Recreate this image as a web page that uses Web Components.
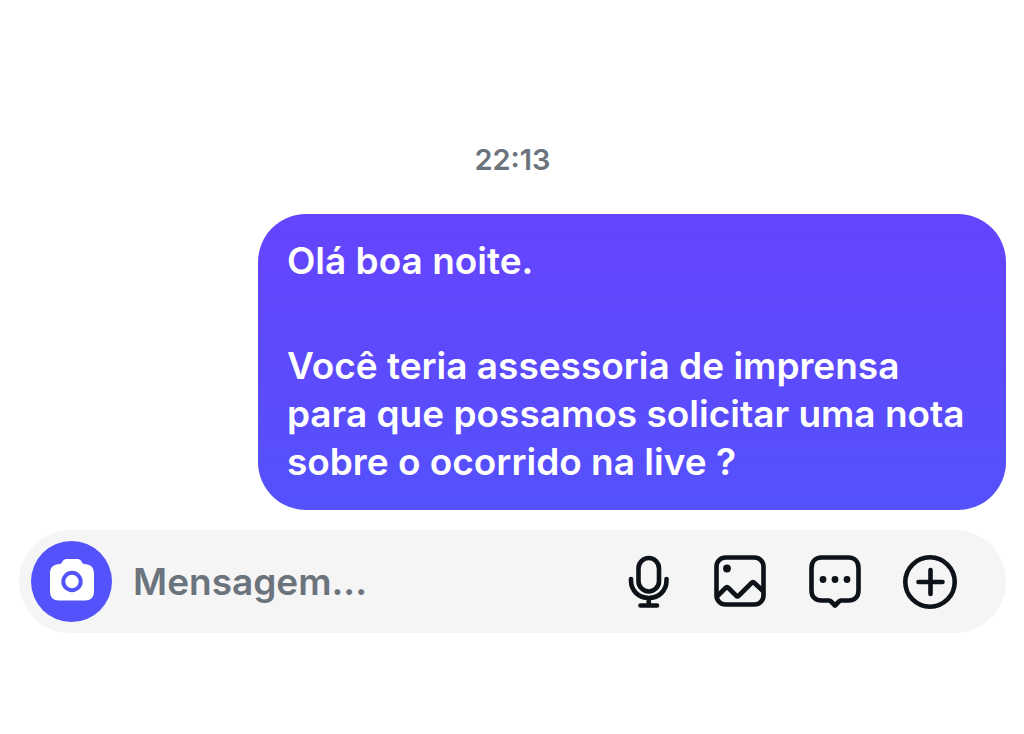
<!DOCTYPE html>
<html lang="pt-BR">
<head>
<meta charset="utf-8">
<meta name="viewport" content="width=device-width, initial-scale=1">
<title>Mensagem</title>
<style>
  body { margin: 0; background: #fff; font-family: Inter, "Liberation Sans", sans-serif; }
</style>
</head>
<body>
<chat-thread>
  <chat-time>22:13</chat-time>
  <chat-bubble>
    <p>Olá boa noite.</p>
    <p>Você teria assessoria de imprensa para que possamos solicitar uma nota sobre o ocorrido na live ?</p>
  </chat-bubble>
  <chat-composer></chat-composer>
</chat-thread>

<script>
function define(name, html) {
  const template = document.createElement('template');
  template.innerHTML = html;
  customElements.define(name, class extends HTMLElement {
    constructor() {
      super();
      this.attachShadow({ mode: 'open' }).append(template.content.cloneNode(true));
    }
  });
}

define('chat-thread', `
  <style>
    :host { display: flex; flex-direction: column; padding: 144px 18px 24px 19px; }
  </style>
  <slot></slot>`);

define('chat-time', `
  <style>
    :host { display: block; text-align: center; color: #6b737c; font-size: 29px; font-weight: 600; line-height: 32px; }
    time { display: block; }
  </style>
  <time><slot></slot></time>`);

define('chat-bubble', `
  <style>
    :host {
      display: flex; flex-direction: column; gap: 57px; align-self: flex-end;
      box-sizing: border-box; width: calc(76% - 2px); margin-top: 38px; padding: 23px 32px 24px 29px;
      border-radius: 48px; background: linear-gradient(#6544fd, #5451fc);
      color: #fff; font-size: 37px; font-weight: 600; line-height: 48px;
    }
    ::slotted(p) { margin: 0; }
  </style>
  <slot></slot>`);

define('icon-button', `
  <style>
    :host { display: block; flex: none; }
    button {
      display: grid; place-items: center; width: 56px; height: 56px; padding: 0;
      border: 0; border-radius: 50%; background: none; color: #0d1118; cursor: pointer;
    }
    :host([filled]) button { width: 81px; height: 81px; background: #5453fb; color: #fff; }
    ::slotted(svg) { display: block; width: 56px; height: 56px; }
  </style>
  <button type="button"><slot></slot></button>`);

/* Passes the host's label on to the inner button. */
document.querySelectorAll('icon-button').forEach(labelButton);
function labelButton(host) {
  host.shadowRoot.querySelector('button').setAttribute('aria-label', host.getAttribute('label'));
}

define('chat-composer', `
  <style>
    :host { display: block; margin-top: 20px; }
    form {
      display: flex; align-items: center; box-sizing: border-box; min-height: 103px;
      padding: 8px 48px 8px 12px; border-radius: 52px; background: #f5f5f5;
    }
    input {
      flex: 1; min-width: 0; margin: 0 16px 0 21px; padding: 0; border: 0; outline: 0; background: none;
      color: #0d1118; font: 600 37px/48px Inter, "Liberation Sans", sans-serif;
    }
    input::placeholder { color: #6b737c; opacity: 1; }
    .tools { display: flex; gap: 38px; }
  </style>
  <form>
    <icon-button filled label="Câmera">
      <svg viewBox="0 0 56 56">
        <path fill="currentColor" d="M16 10 C18 10 18.500 5 22.500 5 H33.500 C37.500 5 38 10 40 10 C46.500 10 50 13.500 50 19.500 V37.500 C50 43.500 46.500 46.500 41 46.500 H15 C9.500 46.500 6 43.500 6 37.500 V19.500 C6 13.500 9.500 10 16 10 Z"/>
        <circle cx="28" cy="27.500" r="8.700" fill="none" stroke="#5453fb" stroke-width="4"/>
      </svg>
    </icon-button>
    <input type="text" placeholder="Mensagem..." aria-label="Mensagem">
    <div class="tools">
      <icon-button label="Mensagem de voz">
        <svg viewBox="0 0 56 56" fill="none" stroke="currentColor" stroke-width="4.600" stroke-linecap="round">
          <rect x="18.500" y="4" width="20.500" height="33.500" rx="10.250"/>
          <path d="M11 25 V26.500 C11 36.500 18.500 44 28.750 44 C39 44 46.500 36.500 46.500 26.500 V25 M28.750 44.500 V51.500 M20.500 51.500 H37"/>
        </svg>
      </icon-button>
      <icon-button label="Foto">
        <svg viewBox="0 0 56 56" fill="none" stroke="currentColor" stroke-width="4.600" stroke-linejoin="round">
          <rect x="2.500" y="3.500" width="47" height="47" rx="9"/>
          <path d="M3 42.500 L11.500 34 Q13 32.500 14.500 34 L22 41.500 Q23.500 43 25 41.500 L37.500 29 Q39 27.500 40.500 29 L49.500 37.500"/>
          <circle cx="13" cy="14.500" r="3.900" fill="currentColor" stroke="none"/>
        </svg>
      </icon-button>
      <icon-button label="Respostas">
        <svg viewBox="0 0 56 56" fill="none" stroke="currentColor" stroke-width="4.600" stroke-linejoin="round">
          <path d="M13.500 3.500 H40.500 C46.500 3.500 50.500 7.500 50.500 14 V36.500 C50.500 43 46.500 46.500 40.500 46.500 H33 Q31.800 46.500 31 47.500 L27 51.500 L23 47.500 Q22.200 46.500 21 46.500 H13.500 C7.500 46.500 3.500 43 3.500 36.500 V14 C3.500 7.500 7.500 3.500 13.500 3.500 Z"/>
          <g fill="currentColor" stroke="none"><circle cx="15" cy="25.500" r="3.400"/><circle cx="27" cy="25.500" r="3.400"/><circle cx="39" cy="25.500" r="3.400"/></g>
        </svg>
      </icon-button>
      <icon-button label="Mais">
        <svg viewBox="0 0 56 56" fill="none" stroke="currentColor" stroke-width="4.600" stroke-linecap="round">
          <circle cx="28" cy="28" r="24.700"/>
          <path d="M28.500 16 V40 M16.500 28 H40.500"/>
        </svg>
      </icon-button>
    </div>
  </form>`);

document.querySelector('chat-composer').shadowRoot.querySelectorAll('icon-button').forEach(labelButton);
</script>
</body>
</html>
